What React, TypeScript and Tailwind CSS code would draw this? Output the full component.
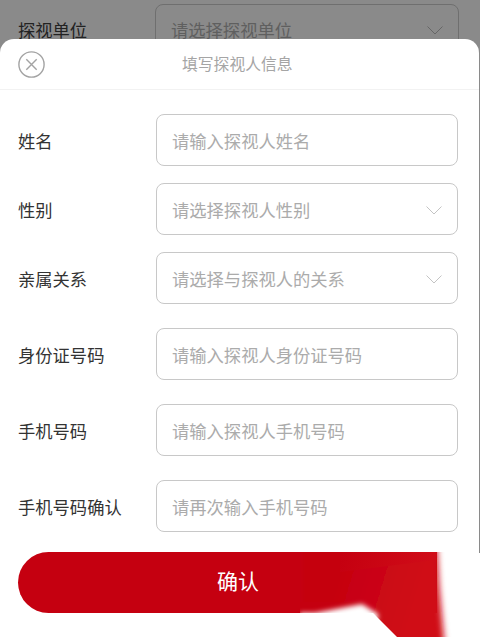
const cjk = "font-['Noto_Sans_CJK_SC','Liberation_Sans',sans-serif]";

function Chevron() {
  return (
    <svg width="16" height="9" viewBox="0 0 16 9" fill="none" stroke="#c4c4c4" strokeWidth="1">
      <path d="M0.5 0.5 L8 8 L15.5 0.5" />
    </svg>
  );
}

function Row({ label, placeholder, select, mb }: { label: string; placeholder: string; select?: boolean; mb: string }) {
  return (
    <div className={`flex items-center ${mb}`}>
      <div className="w-[138px] shrink-0 pt-[2px] text-[17.3px] text-[#333]">{label}</div>
      <div className="flex h-[52px] w-[302px] items-center justify-between rounded-[8px] border-[1.5px] border-[#c8c8c8] pl-[15px] pr-[15px] pt-[2px] text-[17.3px] text-[#ababab]">
        <span>{placeholder}</span>
        {select ? <Chevron /> : null}
      </div>
    </div>
  );
}

export default function App() {
  return (
    <div className={`relative h-[637px] w-[480px] overflow-hidden bg-[#8a8a8a] ${cjk}`}>
      <div className="flex h-[39px] pl-[18px] pt-[4px]">
        <div className="w-[137px] shrink-0 pt-[13px] text-[17.3px] text-[#222]">探视单位</div>
        <div className="flex h-[52px] w-[304px] shrink-0 items-center justify-between rounded-[8px] border-[1.5px] border-[#6f6f6f] pl-[15px] pr-[15px] text-[17.3px] text-[#5f5f5f]">
          <span>请选择探视单位</span>
          <svg width="16" height="9" viewBox="0 0 16 9" fill="none" stroke="#666" strokeWidth="1">
            <path d="M0.5 0.5 L8 8 L15.5 0.5" />
          </svg>
        </div>
      </div>
      <div className="relative h-[598px] w-[479px] rounded-t-[14px] bg-white">
        <div className="flex h-[51px] items-center border-b border-[#f2f2f2] pl-[18px]">
          <svg width="27" height="27" viewBox="0 0 27 27" fill="none" stroke="#a3a3a3" strokeWidth="1.4">
            <circle cx="13.5" cy="13.5" r="12.6" />
            <path d="M8.3 8.3 L18.7 18.7 M18.7 8.3 L8.3 18.7" />
          </svg>
          <div className="ml-[137px] text-[15.8px] text-[#a5a5a5]">填写探视人信息</div>
        </div>
        <div className="pl-[18px] pt-[24px]">
          <Row label="姓名" placeholder="请输入探视人姓名" mb="mb-[17px]" />
          <Row label="性别" placeholder="请选择探视人性别" select mb="mb-[17px]" />
          <Row label="亲属关系" placeholder="请选择与探视人的关系" select mb="mb-[24px]" />
          <Row label="身份证号码" placeholder="请输入探视人身份证号码" mb="mb-[24px]" />
          <Row label="手机号码" placeholder="请输入探视人手机号码" mb="mb-[24px]" />
          <Row label="手机号码确认" placeholder="请再次输入手机号码" mb="mb-[20px]" />
          <div className="flex h-[61px] w-[419px] items-center justify-center rounded-l-[31px] bg-[#c50010] pb-[3px] pl-[21px] text-[21px] text-white">确认</div>
        </div>
      </div>
      <svg className="absolute left-[300px] top-[545px]" width="180" height="92" viewBox="300 545 180 92">
        <defs>
          <linearGradient id="wing" gradientUnits="userSpaceOnUse" x1="335" y1="575" x2="420" y2="600">
            <stop offset="0" stopColor="#c50010" />
            <stop offset="1" stopColor="#d00c18" />
          </linearGradient>
          <filter id="edge" x="-30%" y="-30%" width="160%" height="160%">
            <feGaussianBlur stdDeviation="3" />
          </filter>
          <filter id="soft" x="-30%" y="-60%" width="160%" height="220%">
            <feGaussianBlur stdDeviation="2.5" />
          </filter>
          <clipPath id="below">
            <rect x="300" y="552" width="180" height="85" />
          </clipPath>
          <clipPath id="diag">
            <polygon points="300,552 480,552 480,637 397,637 362,602 300,602" />
          </clipPath>
        </defs>
        <rect x="478" y="553" width="2" height="84" fill="#ffffff" />
        <g clipPath="url(#below)">
          <g clipPath="url(#diag)">
            <polygon points="300,530 436,530 439,585 446,660 340,660 300,620" fill="url(#wing)" filter="url(#edge)" />
          </g>
          <polygon points="340,552 437,552 436,560 340,572" fill="url(#wing)" />
        </g>
        <polygon points="300,613 315,613 362,604 378,614 378,620 300,620" fill="#ffffff" filter="url(#soft)" />
      </svg>
    </div>
  );
}
